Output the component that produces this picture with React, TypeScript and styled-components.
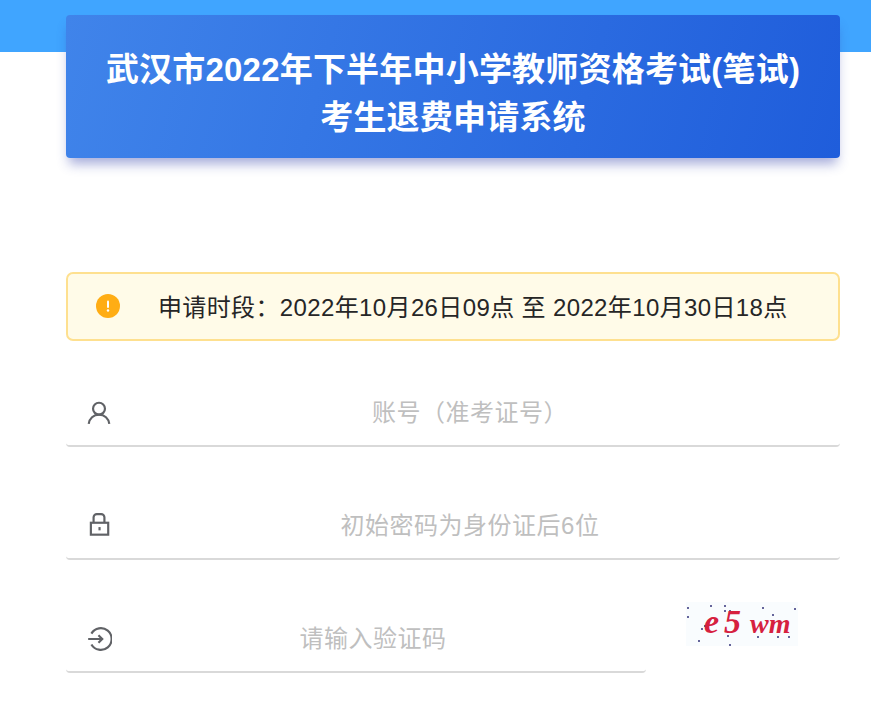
import { ReactNode } from 'react';
import styled, { createGlobalStyle } from 'styled-components';

const GlobalStyle = createGlobalStyle`
    html, body {
        margin: 0;
        padding: 0;
        background: #fff;
        overflow: hidden;
    }
    body {
        font-family: "Liberation Sans", "Noto Sans CJK SC", sans-serif;
    }
    * {
        box-sizing: border-box;
    }
`;

const TopBar = styled.div`
    height: 52px;
    background-color: #40a5ff;
`;

const Main = styled.div`
    padding: 0 31px 0 66px;
`;

const TitleCard = styled.div`
    height: 143px;
    margin-top: -37px;
    padding-top: 14px;
    display: flex;
    flex-direction: column;
    justify-content: center;
    align-items: center;
    border-radius: 4px;
    background: linear-gradient(105deg, #4084ea 0%, #1f5ddb 100%);
    box-shadow: 0 9px 12px -3px rgba(45, 60, 170, 0.42);
    position: relative;
    h1 {
        margin: 0;
        color: #fff;
        font-size: 33px;
        font-weight: 700;
        letter-spacing: 0.2px;
        line-height: 48px;
        text-align: center;
        white-space: nowrap;
    }
`;

const Notice = styled.div`
    height: 69px;
    margin-top: 114px;
    padding: 0 0 2px 28px;
    display: flex;
    align-items: center;
    border: 2px solid #fee08f;
    border-radius: 7px;
    background-color: #fffbe8;
    font-size: 24px;
    letter-spacing: 0.37px;
    color: #262626;
    svg {
        flex: none;
    }
    span {
        margin-left: 38px;
        white-space: nowrap;
    }
`;

const Field = styled.label<{ $width?: string }>`
    width: ${({ $width }) => $width || '100%'};
    height: 76px;
    padding: 10px 12px 0 20px;
    display: flex;
    align-items: center;
    border-bottom: 2px solid #d9d9d9;
    border-radius: 4px;
    svg {
        flex: none;
    }
`;

const FieldInput = styled.input`
    flex: 1;
    min-width: 0;
    height: 44px;
    padding: 0;
    border: none;
    outline: none;
    background: transparent;
    font-family: inherit;
    font-size: 24px;
    letter-spacing: 0.5px;
    text-align: center;
    &::placeholder {
        color: #bfbfbf;
        opacity: 1;
    }
`;

const Fields = styled.div`
    margin-top: 30px;
    display: flex;
    flex-direction: column;
    gap: 37px;
`;

const CaptchaRow = styled.div`
    display: flex;
    align-items: flex-start;
`;

const Captcha = styled.svg`
    flex: none;
    margin: 5px 0 0 40px;
`;

const CaptchaText = styled.text<{ $size: number; $spacing: number }>`
    font-family: "Liberation Serif", serif;
    font-style: italic;
    font-weight: 700;
    font-size: ${({ $size }) => $size}px;
    letter-spacing: ${({ $spacing }) => $spacing}px;
    fill: #d6213f;
`;

const dots = [
    [2, 6], [2, 15], [25, 4], [39, 4], [39, 9], [44, 9], [77, 6], [109, 7], [87, 13],
    [16, 27], [19, 24], [13, 39], [42, 34], [44, 43], [72, 35], [92, 35], [103, 35],
];

const IconWrap = ({ size, children }: { size: number; children: ReactNode }) => (
    <svg width={size} height={size} viewBox="0 0 24 24" fill="none" stroke="#606266" strokeWidth="2">
        {children}
    </svg>
);

const App = () => {
    return (
        <>
            <GlobalStyle />
            <TopBar />
            <Main>
                <TitleCard>
                    <h1>武汉市2022年下半年中小学教师资格考试(笔试)</h1>
                    <h1>考生退费申请系统</h1>
                </TitleCard>
                <Notice>
                    <svg width="24" height="24" viewBox="0 0 24 24">
                        <circle cx="12" cy="12" r="12" fill="#ffad14" />
                        <rect x="11" y="6.500" width="2" height="7.500" rx="1" fill="#fff" />
                        <circle cx="12" cy="16.500" r="1.200" fill="#fff" />
                    </svg>
                    <span>申请时段：2022年10月26日09点 至 2022年10月30日18点</span>
                </Notice>
                <Fields>
                    <Field>
                        <IconWrap size={26}>
                            <circle cx="12" cy="8" r="5.500" />
                            <path d="M2.500 22c.6-5 4.400-8.500 9.500-8.500s8.900 3.500 9.500 8.500" />
                        </IconWrap>
                        <FieldInput placeholder="账号（准考证号）" />
                    </Field>
                    <Field>
                        <IconWrap size={26}>
                            <rect x="4.500" y="9" width="16" height="11" />
                            <path d="M7 9V4a3 3 0 0 1 3-3h4a3 3 0 0 1 3 3v5" />
                            <path d="M12.500 13v3" />
                        </IconWrap>
                        <FieldInput placeholder="初始密码为身份证后6位" />
                    </Field>
                    <CaptchaRow>
                        <Field $width="580px">
                            <IconWrap size={26}>
                                <path d="M5 7a10 10 0 1 1 0 10" />
                                <path d="M2 12h13M11.500 8.500l3.500 3.500-3.500 3.500" />
                            </IconWrap>
                            <FieldInput placeholder="请输入验证码" />
                        </Field>
                        <Captcha width="112" height="44" viewBox="0 0 112 44">
                            <rect width="112" height="44" fill="#f9fcfe" />
                            {dots.map(([x, y]) => (
                                <circle key={`${x}-${y}`} cx={x} cy={y} r="1" fill="#33337a" />
                            ))}
                            <CaptchaText $size={34} $spacing={5} x="18" y="31">e5</CaptchaText>
                            <CaptchaText $size={28} $spacing={0} x="64" y="31">wm</CaptchaText>
                        </Captcha>
                    </CaptchaRow>
                </Fields>
            </Main>
        </>
    );
};

export default App;
